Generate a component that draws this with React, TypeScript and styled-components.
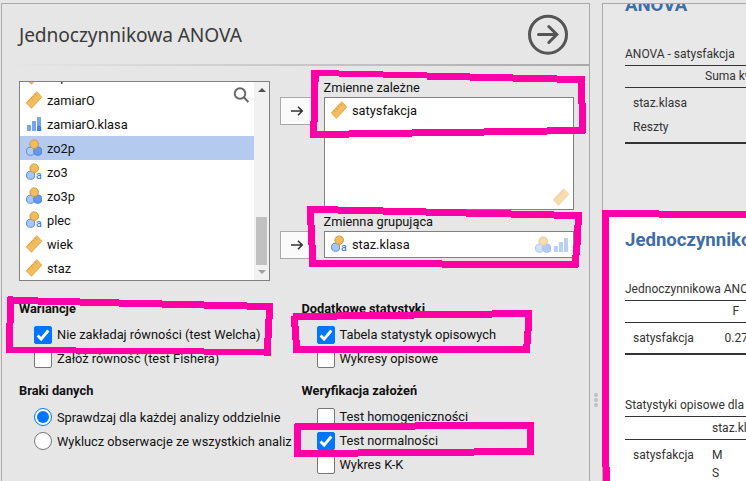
import React from "react";
import styled, { createGlobalStyle } from "styled-components";

const GlobalStyle = createGlobalStyle`
  * { box-sizing: border-box; }
  body { margin: 0; background: #e6e6e6; overflow: hidden; }
`;

const Window = styled.div`
  position: relative;
  display: flex;
  width: 746px;
  height: 481px;
  padding: 3px 0 0 1px;
  overflow: hidden;
  background: #e6e6e6;
  font-family: Roboto, "Liberation Sans", sans-serif;
  font-size: 12.8px;
  color: #111;
  white-space: nowrap;
`;

const OptionsPanel = styled.section`
  width: 589px;
  height: 500px;
  flex: none;
  border: 1px solid #a9a9a9;
`;

const Header = styled.header`
  display: flex;
  align-items: center;
  justify-content: space-between;
  height: 60px;
  padding: 0 21px 0 17px;
`;

const Title = styled.h1`
  margin: 0;
  padding-top: 2px;
  font: 400 19.2px/28px "Noto Sans", sans-serif;
  letter-spacing: -0.1px;
  color: #3b3b3b;
`;

const Divider = styled.div`
  height: 2px;
  margin-left: 7px;
  background: linear-gradient(to right, #e6e6e6, #a9a9a9);
`;

const Assignment = styled.div`
  display: flex;
  align-items: flex-start;
  height: 232px;
  padding: 15px 0 0 17px;
`;

const VariableList = styled.div`
  display: flex;
  position: relative;
  width: 251px;
  height: 200px;
  border: 1px solid #808080;
  background: #fff;
  overflow: hidden;
`;

const Rows = styled.div`
  display: flex;
  flex: 1;
  flex-direction: column;
  justify-content: flex-end;
`;

const Row = styled.div<{ $selected?: boolean }>`
  display: flex;
  flex: none;
  align-items: center;
  gap: 5px;
  height: 24px;
  padding-left: 6px;
  background: ${(p) => (p.$selected ? "#b5caef" : "transparent")};
`;

const Label = styled.span<{ $lower?: boolean }>`
  padding-top: ${(p) => (p.$lower ? 2 : 0)}px;
  line-height: 20px;
`;

const SearchIcon = styled.svg`
  position: absolute;
  left: 213px;
  top: 4px;
`;

const ScrollBar = styled.div`
  display: flex;
  flex-direction: column;
  align-items: center;
  justify-content: space-between;
  width: 15px;
  padding: 6px 0;
  background: #f1f1f1;
`;

const ScrollArrow = styled.i<{ $down?: boolean }>`
  border: 3.5px solid transparent;
  border-${(p) => (p.$down ? "bottom" : "top")}-width: 0;
  border-${(p) => (p.$down ? "top" : "bottom")}: 4px solid ${(p) => (p.$down ? "#a0a0a0" : "#505050")};
  border-left-width: 4px;
  border-right-width: 4px;
`;

const ScrollThumb = styled.div`
  width: 11px;
  height: 48px;
  margin: 125px 0 5px;
  background: #c1c1c1;
`;

const Movers = styled.div`
  display: flex;
  flex-direction: column;
  gap: 106px;
  width: 54px;
  padding: 16px 0 0 10px;
`;

const MoveButton = styled.button`
  display: flex;
  align-items: center;
  justify-content: center;
  width: 34px;
  height: 28px;
  padding: 0;
  border: 1px solid #a9a9a9;
  background: #fafafa;
`;

const Targets = styled.div`
  width: 250px;
  margin-top: -1px;
`;

const TargetLabel = styled.div<{ $compact?: boolean }>`
  height: ${(p) => (p.$compact ? 21 : 17)}px;
  padding-top: ${(p) => (p.$compact ? 4 : 0)}px;
  line-height: 16px;
  margin-left: -0.5px;
`;

const TargetBox = styled.div<{ $height: number }>`
  display: flex;
  justify-content: space-between;
  height: ${(p) => p.$height}px;
  border: 1px solid #808080;
  background: #fff;
`;

const Permitted = styled.div`
  display: flex;
  align-self: flex-end;
  gap: 2px;
  padding: 0 4px 3px 0;
  opacity: 0.5;
`;

const Settings = styled.div`
  display: grid;
  grid-template-columns: 282.5px 1fr;
  padding-left: 17px;
`;

const Group = styled.div`
  margin-bottom: 9px;
`;

const GroupTitle = styled.h2`
  margin: 0 0 3px;
  font-size: 12.8px;
  font-weight: 700;
  line-height: 22px;
`;

const Choice = styled.label`
  display: flex;
  align-items: center;
  gap: 5px;
  height: 24px;
  padding-left: 15px;
`;

const Mark = styled.span<{ $on?: boolean; $radio?: boolean }>`
  display: flex;
  align-items: center;
  justify-content: center;
  flex: none;
  width: 18px;
  height: 18px;
  border: 1px solid ${(p) => (p.$on ? "#0075ff" : "#767676")};
  border-radius: ${(p) => (p.$radio ? "50%" : "2px")};
  background: ${(p) => (p.$on && !p.$radio ? "#0075ff" : "#fff")};
`;

const RadioDot = styled.span`
  width: 12px;
  height: 12px;
  border-radius: 50%;
  background: #0075ff;
`;

const Splitter = styled.div`
  display: flex;
  flex: none;
  flex-direction: column;
  align-items: center;
  gap: 1px;
  width: 12px;
  padding-top: 390px;
`;

const Grip = styled.i`
  width: 4px;
  height: 4px;
  border-radius: 50%;
  background: #c0c0c0;
`;

const Results = styled.section`
  width: 220px;
  height: 500px;
  flex: none;
  border: 1px solid #a9a9a9;
  overflow: hidden;
  background: #e8e8e8;
  font-size: 12px;
  color: #333;
`;

const Analysis = styled.article<{ $active?: boolean }>`
  height: ${(p) => (p.$active ? 280 : 210)}px;
  margin-left: ${(p) => (p.$active ? 6 : 0)}px;
  padding-left: ${(p) => (p.$active ? 16 : 22)}px;
  overflow: hidden;
  background: ${(p) => (p.$active ? "#fff" : "#e8e8e8")};
`;

const AnalysisTitle = styled.h2<{ $clipped?: boolean }>`
  margin: ${(p) => (p.$clipped ? -9 : 16)}px 0 31px;
  height: 20px;
  font-size: 18.6px;
  font-weight: 700;
  line-height: 20px;
  color: #3e6da9;
`;

const ResultTable = styled.div`
  width: 190px;
  margin-bottom: 42px;
`;

const Caption = styled.div`
  height: 20px;
  line-height: 17px;
  border-bottom: 1px solid #333;
`;

const HeadRow = styled.div<{ $indent: number; $tall?: boolean }>`
  height: ${(p) => (p.$tall ? 23 : 22)}px;
  padding-left: ${(p) => p.$indent}px;
  line-height: ${(p) => (p.$tall ? 23 : 21)}px;
  border-bottom: 1px solid #333;
`;

const Body = styled.div<{ $dense?: boolean }>`
  padding: ${(p) => (p.$dense ? 6 : 3)}px 0 3px 8px;
  border-bottom: 2px solid #333;
  line-height: ${(p) => (p.$dense ? 18 : 24)}px;
`;

const BodyRow = styled.div<{ $first: number }>`
  display: grid;
  grid-template-columns: ${(p) => p.$first}px 1fr;
`;

const Marker = styled.svg`
  position: absolute;
  left: 0;
  top: 0;
  fill: #ff00a6;
`;

const Ruler = () => (
  <svg width="16" height="18" viewBox="0 0 16 18">
    <path d="M10.8.7 15.8 6.2 5.4 17.3.3 11.8z" fill="#f1bd60" stroke="#e5a437" strokeWidth=".9" />
    <path d="m8.9 2.8 1.8 1.8M6.9 4.9l1.3 1.4M4.9 7l1.8 1.9M2.9 9.2l1.3 1.4" stroke="#d99525" strokeWidth=".9" />
  </svg>
);

const Nominal = ({ text, pale }: { text?: boolean; pale?: boolean }) => (
  <svg width="16" height="18" viewBox="0 0 16 18">
    <circle cx="4.6" cy="12.2" r="4.1" fill={pale ? "#b5caef" : "#a9c6f5"} stroke="#528be5" />
    {text ? (
      <text x="10" y="16.4" fontFamily="Roboto" fontSize="10.5" fontWeight="500" fill="#3f7ee4">a</text>
    ) : (
      <circle cx="11.8" cy="12.2" r="4.1" fill="#6799ea" stroke="#4281e2" />
    )}
    <circle cx="8.2" cy="5.2" r="4.3" fill="#f0bc5e" stroke="#cf993b" />
  </svg>
);

const Ordinal = ({ text }: { text?: boolean }) => (
  <svg width="16" height="18" viewBox="0 0 16 18">
    <path d="M1 10h4v6H1zM6 6h4v10H6zM11 2h4v14h-4z" fill="#78a5ee" />
    {text && <text x="10.5" y="15.8" fontFamily="Roboto" fontSize="9" fontWeight="700" fill="#2f6fdd">a</text>}
  </svg>
);

const Arrow = () => (
  <svg width="14" height="12" viewBox="0 0 14 12" fill="none" stroke="#333" strokeWidth="1.6">
    <path d="M1 6h11M8 1.8 12.2 6 8 10.2" />
  </svg>
);

const RunArrow = () => (
  <svg width="40" height="42" viewBox="0 0 40 42" fill="none" stroke="#555" strokeWidth="3">
    <circle cx="20" cy="21.7" r="18.5" />
    <path d="M10.5 21.5h18M20.8 13.5l8 8-8 8" strokeLinecap="round" />
  </svg>
);

const Option = ({ label, on, radio }: { label: string; on?: boolean; radio?: boolean }) => (
  <Choice>
    <Mark $on={on} $radio={radio}>
      {on && radio && <RadioDot />}
      {on && !radio && (
        <svg width="16" height="16" viewBox="0 0 16 16" fill="none" stroke="#fff" strokeWidth="2.8">
          <path d="m2.6 8.6 3.5 3.5 7.2-8.6" />
        </svg>
      )}
    </Mark>
    <Label $lower={radio}>{label}</Label>
  </Choice>
);

const variables = [
  { name: "zap", icon: <Ruler /> },
  { name: "zamiarO", icon: <Ruler /> },
  { name: "zamiarO.klasa", icon: <Ordinal text /> },
  { name: "zo2p", icon: <Nominal pale />, selected: true },
  { name: "zo3", icon: <Nominal text /> },
  { name: "zo3p", icon: <Nominal /> },
  { name: "plec", icon: <Nominal text /> },
  { name: "wiek", icon: <Ruler /> },
  { name: "staz", icon: <Ruler /> },
];

/* Brush strokes of the marker: left, right, top, bottom. */
const strokes = [
  [311, 339, 70, 76], [339, 383, 71, 77], [383, 427, 72, 78], [427, 470, 73, 80], [470, 513, 74, 81],
  [513, 557, 75, 82], [557, 585, 76, 83], [578, 585, 76, 104], [579, 586, 103, 133], [311, 319, 70, 82],
  [311, 318, 82, 122], [310, 317, 121, 138], [310, 349, 131, 138], [349, 412, 130, 137], [412, 484, 129, 136],
  [484, 547, 128, 135], [547, 585, 127, 134],
  [307, 338, 206, 213], [338, 383, 207, 214], [383, 426, 208, 215], [426, 466, 209, 216], [466, 511, 210, 217],
  [511, 554, 211, 218], [554, 582, 212, 219], [575, 582, 213, 225], [574, 581, 225, 245], [573, 580, 245, 255],
  [572, 579, 255, 267], [307, 314, 206, 225], [308, 315, 225, 245], [309, 316, 245, 267],
  [309, 442, 260, 267], [442, 578, 261, 268],
  [8, 13, 296, 298], [7, 38, 297, 304], [38, 80, 298, 305], [80, 119, 299, 306], [119, 162, 300, 307],
  [162, 204, 301, 308], [204, 247, 302, 309], [247, 273, 303, 310], [7, 14, 297, 323], [6, 13, 323, 353],
  [266, 273, 303, 319], [265, 272, 319, 338], [264, 271, 338, 356], [6, 76, 347, 353], [76, 204, 348, 354],
  [204, 271, 349, 355],
  [293, 337, 313, 320], [337, 414, 312, 319], [414, 492, 311, 318], [492, 532, 310, 317], [291, 298, 316, 327],
  [292, 299, 326, 340], [293, 300, 340, 353], [294, 529, 346, 353], [525, 532, 310, 331], [524, 531, 331, 344],
  [523, 530, 344, 353],
  [295, 415, 423, 430], [415, 534, 422, 429], [294, 301, 424, 457], [527, 534, 422, 455], [294, 358, 450, 457],
  [358, 474, 449, 456], [474, 534, 448, 455],
  [602, 659, 210, 217], [659, 746, 211, 218], [602, 609, 210, 467], [603, 610, 467, 481],
];

export default function App() {
  return (
    <Window>
      <GlobalStyle />
      <OptionsPanel>
        <Header>
          <Title>Jednoczynnikowa ANOVA</Title>
          <RunArrow />
        </Header>
        <Divider />
        <Assignment>
          <VariableList>
            <Rows>
              {variables.map((v) => (
                <Row key={v.name} $selected={v.selected}>
                  {v.icon}
                  <Label $lower>{v.name}</Label>
                </Row>
              ))}
            </Rows>
            <ScrollBar>
              <ScrollArrow />
              <ScrollThumb />
              <ScrollArrow $down />
            </ScrollBar>
            <SearchIcon width="17" height="18" fill="none" stroke="#666" strokeWidth="1.9">
              <circle cx="7" cy="7.5" r="5.3" />
              <path d="m11 11.5 4.3 4.5" />
            </SearchIcon>
          </VariableList>
          <Movers>
            <MoveButton><Arrow /></MoveButton>
            <MoveButton><Arrow /></MoveButton>
          </Movers>
          <Targets>
            <TargetLabel>Zmienne zależne</TargetLabel>
            <TargetBox $height={113}>
              <Row><Ruler /><Label $lower>satysfakcja</Label></Row>
              <Permitted><Ruler /></Permitted>
            </TargetBox>
            <TargetLabel $compact>Zmienna grupująca</TargetLabel>
            <TargetBox $height={27}>
              <Row><Nominal text /><Label $lower>staz.klasa</Label></Row>
              <Permitted><Nominal /><Ordinal /></Permitted>
            </TargetBox>
          </Targets>
        </Assignment>
        <Settings>
          <div>
            <Group>
              <GroupTitle>Wariancje</GroupTitle>
              <Option on label="Nie zakładaj równości (test Welcha)" />
              <Option label="Załóż równość (test Fishera)" />
            </Group>
            <Group>
              <GroupTitle>Braki danych</GroupTitle>
              <Option radio on label="Sprawdzaj dla każdej analizy oddzielnie" />
              <Option radio label="Wyklucz obserwacje ze wszystkich analiz" />
            </Group>
          </div>
          <div>
            <Group>
              <GroupTitle>Dodatkowe statystyki</GroupTitle>
              <Option on label="Tabela statystyk opisowych" />
              <Option label="Wykresy opisowe" />
            </Group>
            <Group>
              <GroupTitle>Weryfikacja założeń</GroupTitle>
              <Option label="Test homogeniczności" />
              <Option on label="Test normalności" />
              <Option label="Wykres K-K" />
            </Group>
          </div>
        </Settings>
      </OptionsPanel>
      <Splitter>
        <Grip />
        <Grip />
        <Grip />
      </Splitter>
      <Results>
        <Analysis>
          <AnalysisTitle $clipped>ANOVA</AnalysisTitle>
          <ResultTable>
            <Caption>ANOVA - satysfakcja</Caption>
            <HeadRow $indent={80}>Suma kwadratów</HeadRow>
            <Body>
              <div>staz.klasa</div>
              <div>Reszty</div>
            </Body>
          </ResultTable>
        </Analysis>
        <Analysis $active>
          <AnalysisTitle>Jednoczynnikowa ANOVA</AnalysisTitle>
          <ResultTable>
            <Caption>Jednoczynnikowa ANOVA (test Welcha)</Caption>
            <HeadRow $indent={107.5}>F</HeadRow>
            <Body>
              <BodyRow $first={91.5}><span>satysfakcja</span><span>0.27</span></BodyRow>
            </Body>
          </ResultTable>
          <ResultTable>
            <Caption>Statystyki opisowe dla grup</Caption>
            <HeadRow $indent={87} $tall>staz.klasa</HeadRow>
            <Body $dense>
              <BodyRow $first={79}><span>satysfakcja</span><span>M</span></BodyRow>
              <BodyRow $first={79}><span /><span>S</span></BodyRow>
            </Body>
          </ResultTable>
        </Analysis>
      </Results>
      <Marker width="746" height="481" shapeRendering="crispEdges">
        {strokes.map(([l, r, t, b], i) => (
          <rect key={i} x={l} y={t} width={r - l} height={b - t} />
        ))}
      </Marker>
    </Window>
  );
}
